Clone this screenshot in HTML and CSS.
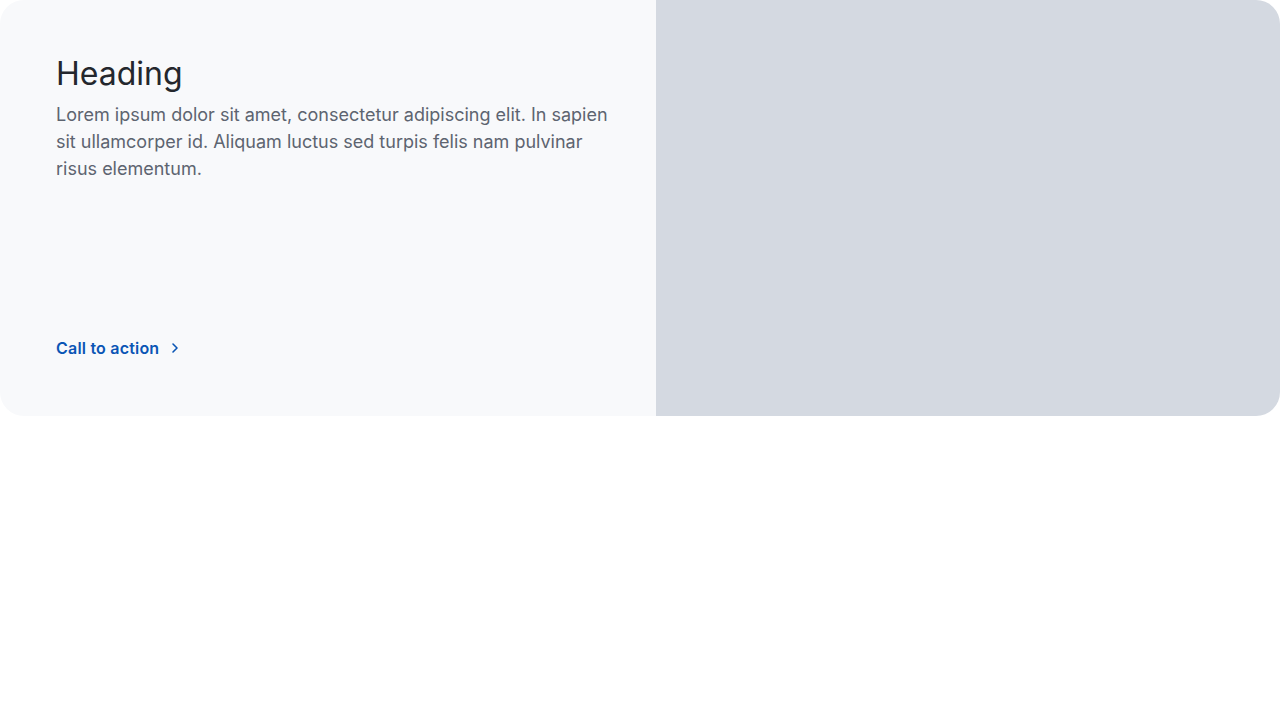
FILE: index.html
```html
<!DOCTYPE html>
<html>
<head>
<meta charset="utf-8">
<link rel="stylesheet" href="styles.css">
</head>
<body>
<div class="card">
  <div class="content">
    <div class="text">
      <h2 class="heading">Heading</h2>
      <p class="body">Lorem ipsum dolor sit amet, consectetur adipiscing elit. In sapien sit ullamcorper id. Aliquam luctus sed turpis felis nam pulvinar risus elementum.</p>
    </div>
    <a class="cta" href="#">Call to action
      <svg class="chev" width="16" height="16" viewBox="0 0 16 16" fill="none"><path d="M6 4l4 4-4 4" stroke="currentColor" stroke-width="1.6" stroke-linecap="round" stroke-linejoin="round"/></svg>
    </a>
  </div>
  <div class="media"></div>
</div>
</body>
</html>
```
FILE: styles.css
```css
* { box-sizing: border-box; }
body { margin: 0; background: #fff; font-family: Inter, "Noto Sans", sans-serif; }
.card { display: flex; height: 416px; border-radius: 24px; overflow: hidden; }
.content { width: 656px; background: #f8f9fb; padding: 52px 40px 56px 56px; display: flex; flex-direction: column; justify-content: space-between; align-items: flex-start; }
.heading { margin: 0 0 5px; font-size: 32px; font-weight: 400; line-height: 44px; color: #24272d; }
.body { margin: 0; font-size: 18px; line-height: 27px; color: #5d6470; }
.cta { display: inline-flex; align-items: center; gap: 8px; font-size: 16px; font-weight: 600; color: #0a55b5; text-decoration: none; line-height: 24px; letter-spacing: 0.2px; }
.media { flex: 1; background: #d4d9e1; }
```
